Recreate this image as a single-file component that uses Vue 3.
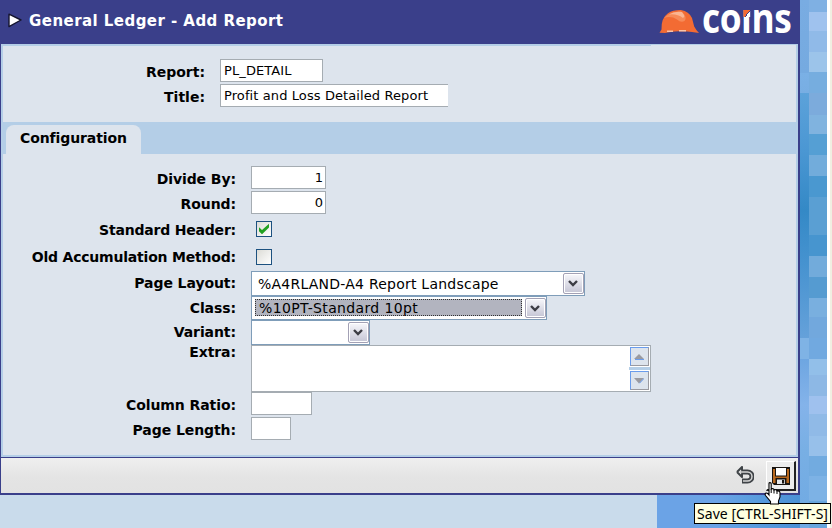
<script setup>
const rightTiles = [
  [12, '#7fb0e3'], [19, '#9fc2ee'], [21, '#90bae8'], [20, '#9cc4ea'], [21, '#76addf'], [22, '#7cabdc'],
  [19, '#80b3df'], [21, '#559fd4'], [21, '#72acdb'], [21, '#4a98d0'], [38, '#5a9fd3'], [21, '#4795cf'],
  [21, '#72abdb'], [21, '#559bd1'], [19, '#79afdf'], [21, '#72a8dd'], [21, '#71a9e0'], [16, '#92bfe9'],
  [21, '#8db8e5'], [18, '#9fc1ee'], [22, '#90bae7'], [20, '#97c0ea'], [20, '#72abe0'], [25, '#7db2e5'], [27, '#68a6de']
]
const lists = {
  layout: '%A4RLAND-A4 Report Landscape',
  klass: '%10PT-Standard 10pt'
}
</script>

<template>
  <div class="page">
    <div class="window">
      <header class="bar">
        <svg class="play" width="14" height="15" viewBox="0 0 14 15"><path d="M1 1.2 L13 7 L1 13.6 Z" fill="#fff" stroke="#15152f" stroke-width="1.4" stroke-linejoin="round" /></svg>
        <h1>General Ledger - Add Report</h1>
        <svg class="hat" width="40" height="25" viewBox="0 0 40 25">
          <path d="M.5 23.8 L2.5 20.5 Q2 9 9 4.2 Q14 .8 22 1 Q30 2.5 33 9 L35.2 17.5 Q37 21 40 24 L33 23 Q28 22 20 22.2 Q11 22.6 6 24 Z" fill="#f36b33" />
          <path d="M5 9 Q11 2.5 22 2.6 L25 5 Q28 9 25.5 12 Q22 14 18 10.5 Q12 6.5 5 9Z" fill="#f78a58" />
          <path d="M10 5.5 Q15 2 23 3 L25 6 Q26 8 24 9 Q18 4.5 10 5.5Z" fill="#fbb592" />
          <path d="M8 22.3 H14 M20 21.7 H27" stroke="#fbc3a6" stroke-width="1.4" />
        </svg>
        <div class="brand">co<span class="i">ı<span class="dot"></span></span>ns</div>
      </header>
      <main class="body">
        <section class="panel head">
          <div class="row"><label>Report:</label><div class="box w103">PL_DETAIL</div></div>
          <div class="row"><label>Title:</label><div class="box w228 open">Profit and Loss Detailed Report</div></div>
        </section>
        <nav class="tabs"><div class="tab">Configuration</div></nav>
        <section class="panel config">
          <div class="row"><label>Divide By:</label><div class="box w75 num">1</div></div>
          <div class="row"><label>Round:</label><div class="box w75 num">0</div></div>
          <div class="row std"><label>Standard Header:</label>
            <div class="check"><svg width="14" height="14" viewBox="0 0 14 14"><path d="M2 5.2 L5 8 L12 1.8 V5.6 L5 12.2 L2 9.2Z" fill="#21a121" /></svg></div>
          </div>
          <div class="row old"><label>Old Accumulation Method:</label><div class="check"></div></div>
          <div class="row sel"><label>Page Layout:</label>
            <div class="select w334"><span class="value">{{ lists.layout }}</span><span class="drop"><svg width="10" height="7" viewBox="0 0 10 7"><path d="M1 1 L5 5 L9 1" fill="none" stroke="#3c3c44" stroke-width="2.4" /></svg></span></div>
          </div>
          <div class="row sel short"><label>Class:</label>
            <div class="select w296"><span class="value focus">{{ lists.klass }}</span><span class="drop"><svg width="10" height="7" viewBox="0 0 10 7"><path d="M1 1 L5 5 L9 1" fill="none" stroke="#3c3c44" stroke-width="2.4" /></svg></span></div>
          </div>
          <div class="row sel"><label>Variant:</label>
            <div class="select w119"><span class="value"></span><span class="drop"><svg width="10" height="7" viewBox="0 0 10 7"><path d="M1 1 L5 5 L9 1" fill="none" stroke="#3c3c44" stroke-width="2.4" /></svg></span></div>
          </div>
          <div class="row extra"><label>Extra:</label>
            <div class="area"><div class="scroll">
              <span class="arrow up"><svg width="10" height="6" viewBox="0 0 10 6"><path d="M0 5 L5 0 L10 5Z" fill="#9a9aa0" /><path d="M1 5.5 H10" stroke="#6a9cec" /></svg></span>
              <span class="arrow down"><svg width="10" height="6" viewBox="0 0 10 6"><path d="M0 0 H10 L5 5.5Z" fill="#9a9aa0" /><path d="M10 .5 L5.5 5.2" stroke="#6a9cec" /></svg></span>
            </div></div>
          </div>
          <div class="row"><label>Column Ratio:</label><div class="box w61"></div></div>
          <div class="row"><label>Page Length:</label><div class="box w40"></div></div>
        </section>
      </main>
      <footer class="tools">
        <svg class="undo" width="18" height="19" viewBox="0 0 18 19">
          <path d="M5 6 H11.5 A4.4 4.4 0 0 1 11.5 15 H6" fill="none" stroke="#3f4347" stroke-width="5" />
          <path d="M1 6 L6 1 V4 M1 6 L6 11 V8" fill="#e4e4e4" stroke="#3f4347" stroke-width="2" stroke-linejoin="round" />
          <path d="M3 6 H11.5 A4.4 4.4 0 0 1 11.5 15 H7" fill="none" stroke="#d4d4d4" stroke-width="1.5" />
        </svg>
        <div class="save">
          <svg width="18" height="18" viewBox="0 0 18 18">
            <path d="M0 0 H18 V18 H2 L0 16Z" fill="#191410" />
            <path d="M1 2 H17 V16 H1Z" fill="#b9691f" />
            <path d="M3 0 H15 V9.5 H3Z M3.5 11 H14.5 V18 H3.5Z" fill="#191410" />
            <path d="M4 1 H14 V8.5 H4Z" fill="#fff" /><path d="M5 12.5 H13 V17 H5Z" fill="#e4e7ea" /><path d="M10 13 H12.2 V16.5 H10Z" fill="#191410" />
          </svg>
        </div>
      </footer>
    </div>
    <aside class="mosaic">
      <div class="thin"></div>
      <div class="tiles"><div v-for="(t, i) in rightTiles" :key="i" :style="{ height: t[0] + 'px', background: t[1] }"></div></div>
      <div class="edge"></div>
    </aside>
    <div class="under"></div>
    <div class="tip">Save [CTRL-SHIFT-S]</div>
    <svg class="hand" width="18" height="23" viewBox="0 0 18 23">
      <path d="M5 1.5 Q5 .6 6 .6 Q7.2 .6 7.2 1.8 V7 Q9.8 6 10 8 Q12.5 7.2 13 9 Q16 8.5 16 11 V15 L14.5 19 V22 H6.5 V19.5 L1.5 13.5 Q.5 11.5 2 11 Q3.5 10.8 5 13Z" fill="#fff" stroke="#000" stroke-width="1.1" />
      <path d="M7.2 7 V11 M10 8 V11.5 M13 9 V12" stroke="#000" />
    </svg>
  </div>
</template>

<style>
body { margin: 0; overflow: hidden; }
</style>
<style scoped>
* { box-sizing: border-box; }
.page { position: relative; width: 832px; height: 528px; overflow: hidden; display: grid; grid-template-columns: 800px 32px; background: #c9dbeb; font-family: "DejaVu Sans", sans-serif; color: #000; }
.window { height: 495px; display: flex; flex-direction: column; border-left: 1px solid #3a3f8a; border-right: 2px solid #3a3f8a; border-bottom: 2px solid #3a3f8a; background: #b4cee7; }
.bar { height: 44px; flex: none; background: #3a3f8a; display: flex; align-items: flex-start; color: #fff; }
.play { flex: none; margin: 13px 0 0 7px; }
h1 { flex: none; margin: 11px 0 0 7px; width: 620px; font-size: 15px; line-height: 20px; font-weight: bold; letter-spacing: .45px; white-space: nowrap; }
.hat { flex: none; margin: 9px 0 0 10px; }
.brand { flex: none; font: bold 41px/34px "Open Sans", sans-serif; margin: 0 0 0 3px; letter-spacing: -.5px; white-space: nowrap; transform: scaleX(.86); transform-origin: 0 0; }
.i { position: relative; }
.dot { position: absolute; left: 3px; top: 21px; width: 8px; height: 7px; background: linear-gradient(135deg, #f36b33 54%, #3a3f8a 54%, #3a3f8a 62%, #fff 62%); }
.body { height: 413px; flex: none; padding: 2px 2px 2px; background: linear-gradient(#dde4ed, #dde4ed) 650px 1px / 145px 1px no-repeat; }
.panel { background: #dde4ed; }
.head { height: 76px; padding-top: 13px; }
.row { display: flex; height: 25px; align-items: flex-start; }
label { width: 233px; flex: none; text-align: right; padding-top: 4px; margin-right: 15px; font-weight: bold; font-size: 14px; line-height: 18px; letter-spacing: -.08px; white-space: nowrap; }
.head label { width: 202px; letter-spacing: 0; }
.box { height: 23px; border: 1px solid #a5acb2; background: #fff; font-size: 13px; line-height: 22px; letter-spacing: .1px; padding: 0 3px; white-space: nowrap; }
.open { border-right: 0; }
.num { text-align: right; padding-right: 2px; }
.w103 { width: 103px; } .w228 { width: 228px; } .w75 { width: 75px; } .w61 { width: 61px; } .w40 { width: 40px; }
.tabs { height: 32px; padding: 3px 0 0 3px; }
.tab { width: 135px; height: 29px; background: #dde4ed; border-radius: 8px 8px 0 0; padding: 3px 0 0 14px; font-size: 14px; font-weight: bold; line-height: 20px; letter-spacing: -.1px; }
.config { height: 301px; padding-top: 12px; }
.std { height: 27px; } .old { height: 28px; }
.std label, .old label { padding-top: 5px; letter-spacing: -.2px; }
.check { width: 16px; height: 16px; margin: 5px 0 0 5px; border: 1px solid #1c5180; background: linear-gradient(135deg, #dcdcd7, #fff); }
.check svg { display: block; }
.old .check { margin-top: 6px; }
.sel label { padding-top: 3px; }
.short { height: 24px; }
.select { height: 100%; border: 1px solid #7f9db9; background: #fff; display: flex; padding: 1px 0 1px 1px; font-size: 14px; line-height: 20px; letter-spacing: .23px; }
.w334 { width: 334px; } .w296 { width: 296px; } .w119 { width: 119px; }
.value { flex: 1; padding-left: 4px; margin: 1px 3px 1px 1px; white-space: nowrap; }
.focus { background: #b2b4bf; border: 1px dotted #333; margin: 1px 3px 2px 2px; padding-left: 3px; line-height: 16px; letter-spacing: .36px; }
.drop { width: 21px; display: flex; align-items: center; justify-content: center; border: 1px solid #a3a1b5; border-radius: 2px; box-shadow: inset 0 0 0 1px #fff; background: linear-gradient(#f7f7fb, #c5c5d5); padding-right: 1px; }
.extra { height: 47px; }
.extra label { padding: 0; margin-top: -2px; }
.area { width: 400px; height: 47px; border: 1px solid #a5acb2; background: #fff; display: flex; justify-content: flex-end; }
.scroll { width: 21px; display: flex; flex-direction: column; justify-content: space-between; padding: 1px; background: linear-gradient(#fff 21px, #b4cee7 21px, #b4cee7 24px, #fff 24px); }
.arrow { width: 19px; height: 19px; border: 1px solid #6a9cec; border-right-color: #9a9aa0; border-bottom-color: #9a9aa0; background: #dde4ed; display: flex; align-items: center; justify-content: center; padding-right: 1px; }
.tools { flex: 1; border-top: 1px solid #3a3f8a; background: linear-gradient(#efefef, #e4e4e4 55%, #e2e2e2); display: flex; justify-content: flex-end; }
.undo { margin: 8px 12px 0 0; }
.save { width: 30px; height: 30px; margin: 3px 2px 0 0; border: 1px solid #fff; border-right: 2px solid #222; border-bottom: 2px solid #222; background: #ececec; padding: 5px; }
.save svg { display: block; }
.mosaic { display: flex; }
.thin { width: 9px; background: linear-gradient(#79ace2, #75aae0 73px, #7ab0e5 73px, #78aee3 93px, #5ca2da 93px, #4b97d3 150px, #3489c6 210px, #4592cf 260px, #65a1da 338px, #7fb3e5 338px, #7fb3e5 359px, #6ea6e1 359px, #84b3ea 405px, #78afe4 450px, #6fa9e3); }
.tiles { width: 18px; }
.edge { width: 5px; background: #fff; border-right: 2px solid #f0efe2; }
.under { position: absolute; left: 657px; top: 495px; width: 143px; height: 33px; background: linear-gradient(90deg, #6ba3e6 60px, #5c9ee0 90px, #4b91d5); }
.tip { position: absolute; left: 694px; top: 503px; width: 137px; height: 21px; border: 1px solid #000; background: #ffffe1; font: 14px/19px "Noto Sans", sans-serif; letter-spacing: .05px; padding-left: 2px; white-space: nowrap; }
.hand { position: absolute; left: 764px; top: 482px; }
</style>
